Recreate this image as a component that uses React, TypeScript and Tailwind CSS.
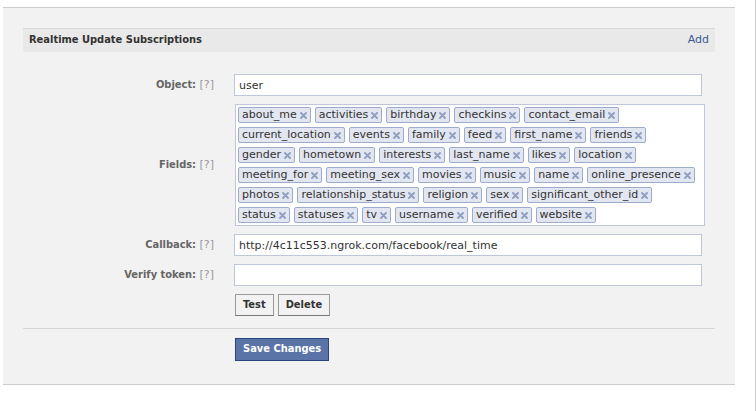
const tagRows: string[][] = [
  ["about_me", "activities", "birthday", "checkins", "contact_email"],
  ["current_location", "events", "family", "feed", "first_name", "friends"],
  ["gender", "hometown", "interests", "last_name", "likes", "location"],
  ["meeting_for", "meeting_sex", "movies", "music", "name", "online_presence"],
  ["photos", "relationship_status", "religion", "sex", "significant_other_id"],
  ["status", "statuses", "tv", "username", "verified", "website"],
];

const bold = "font-['DejaVu_Sans_Condensed','DejaVu_Sans',sans-serif] font-bold";

function Label({ text }: { text: string }) {
  return (
    <div className="w-[191px] shrink-0 text-right text-[11px] leading-[14px] whitespace-nowrap">
      <span className={`${bold} text-[#666]`}>{text}</span>{" "}
      <span className="text-[#999]">[?]</span>
    </div>
  );
}

function Tag({ name }: { name: string }) {
  return (
    <span className="flex h-[16px] items-center rounded-[2px] border border-[#9dacce] bg-[#e2e6f0] pl-[3px] pr-[3px] text-[11px] leading-[14px] text-[#333]">
      {name}
      <svg width="7" height="7" viewBox="0 0 7 7" className="ml-[3px]">
        <path d="M1 1L6 6M6 1L1 6" stroke="#8f9dbf" strokeWidth="1.8" strokeLinecap="round" />
      </svg>
    </span>
  );
}

function TextField({ value }: { value?: string }) {
  return (
    <input
      readOnly
      defaultValue={value ?? ""}
      className="ml-[20px] h-[22px] w-[468px] border border-[#bdc7d8] bg-white px-[4px] text-[11px] text-[#333] outline-none"
    />
  );
}

export default function App() {
  return (
    <div className="flex h-[411px] w-[756px] border-r border-[#ccc] bg-white font-['DejaVu_Sans',sans-serif]">
      <div className="ml-[3px] mt-[7px] h-[378px] w-[732px] border-y border-[#ccc] bg-[#f2f2f2] px-[20px] pt-[20px]">
        <div className="flex h-[24px] items-center justify-between border-t border-[#d8d8d8] bg-[#e9e9e9] pl-[6px] pr-[6px] text-[11px]">
          <span className={`${bold} text-[#333]`}>Realtime Update Subscriptions</span>
          <a className="text-[#3b5998]">Add</a>
        </div>

        <div className="mt-[22px] flex items-center">
          <Label text="Object:" />
          <TextField value="user" />
        </div>

        <div className="mt-[8px] flex items-center">
          <Label text="Fields:" />
          <div className="ml-[21px] flex h-[122px] w-[470px] flex-col gap-[4px] border border-[#bdc7d8] bg-white p-[2px]">
            {tagRows.map((row, i) => (
              <div key={i} className="flex gap-[4px]">
                {row.map((t) => (
                  <Tag key={t} name={t} />
                ))}
              </div>
            ))}
          </div>
        </div>

        <div className="mt-[8px] flex items-center">
          <Label text="Callback:" />
          <TextField value="http://4c11c553.ngrok.com/facebook/real_time" />
        </div>

        <div className="mt-[8px] flex items-center">
          <Label text="Verify token:" />
          <TextField />
        </div>

        <div className="ml-[212px] mt-[8px] flex gap-[4px]">
          <button className={`${bold} h-[22px] border border-[#999] border-b-[#777] bg-[#f2f2f2] px-[7px] text-[11px] text-[#333]`}>
            Test
          </button>
          <button className={`${bold} h-[22px] border border-[#999] border-b-[#777] bg-[#f2f2f2] px-[7px] text-[11px] text-[#333]`}>
            Delete
          </button>
        </div>

        <div className="mt-[12px] border-t border-[#d6d6d6]" />

        <div className="ml-[212px] mt-[9px] flex">
          <button className={`${bold} h-[23px] border border-[#29447e] bg-[#5b74a8] px-[7px] text-[11px] text-white`}>
            Save Changes
          </button>
        </div>
      </div>
    </div>
  );
}
